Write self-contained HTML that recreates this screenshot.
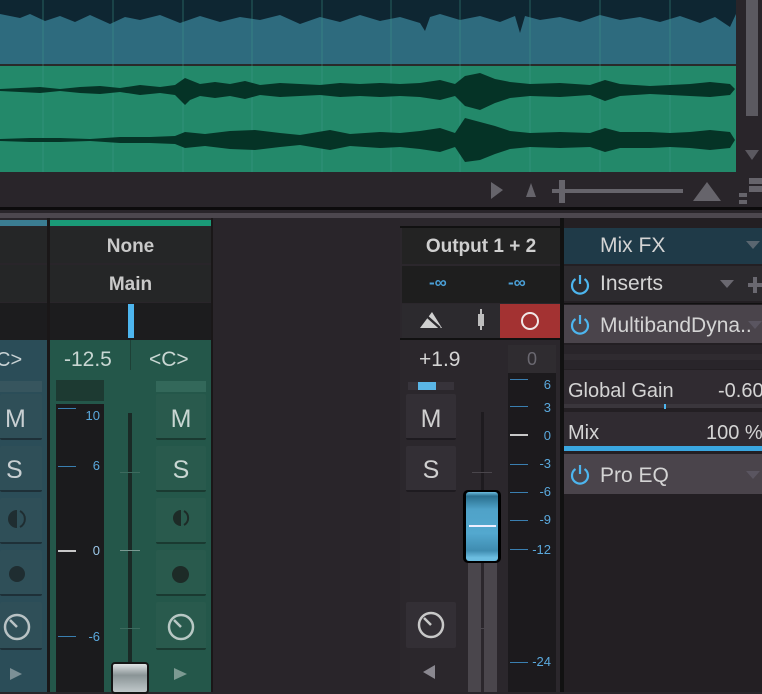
<!DOCTYPE html>
<html><head><meta charset="utf-8"><style>
*{margin:0;padding:0;box-sizing:border-box}
body{width:762px;height:692px;overflow:hidden;background:#29252a;font-family:"Liberation Sans",sans-serif;position:relative}
.a{position:absolute}
.t{position:absolute;white-space:nowrap;transform:translateY(2px)}
.btn{position:absolute;border-radius:2px}
.lbl{color:#5aa8dc;font-size:13px;text-align:right;width:30px}
</style></head><body>
<svg class="a" style="left:0;top:0" width="762" height="220">
<rect x="0" y="0" width="736" height="65" fill="#2e6b7e"/>
<rect x="0" y="0" width="736" height="14" fill="#0e2632"/>
<polyline fill="#0e2632" points="0,14 20,18 30,14 45,21 60,16 75,22 90,15 110,24 125,17 140,20 160,15 180,23 200,16 220,22 240,17 260,20 280,15 300,24 320,17 340,22 360,15 380,21 400,17 420,23 425,31 430,17 440,14 460,20 480,16 500,22 515,16 520,33 525,16 540,20 560,17 580,22 600,15 620,20 640,17 660,22 680,16 700,23 715,17 730,27 736,14"/>
<rect x="0" y="64" width="736" height="2" fill="#2a2a2a"/>
<rect x="0" y="66" width="736" height="106" fill="#23896a"/>
<g stroke="#3e9a8a" stroke-width="1" opacity=".5">
<line x1="43" y1="0" x2="43" y2="172"/><line x1="113" y1="0" x2="113" y2="172"/><line x1="183" y1="0" x2="183" y2="172"/><line x1="252" y1="0" x2="252" y2="172"/><line x1="322" y1="0" x2="322" y2="172"/><line x1="391" y1="0" x2="391" y2="172"/><line x1="460" y1="0" x2="460" y2="172"/><line x1="530" y1="0" x2="530" y2="172"/><line x1="600" y1="0" x2="600" y2="172"/><line x1="670" y1="0" x2="670" y2="172"/></g>
<g fill="#053326">
<polygon points="0,89 20,88 40,87 60,89 80,87 100,86 120,88 140,85 160,87 175,85 185,78 190,80 200,84 215,82 230,84 245,81 260,85 280,83 300,84 320,85 340,83 360,84 380,83 400,84 420,83 440,80 455,84 465,76 480,73 495,79 510,82 530,84 560,83 590,85 605,80 620,84 650,86 670,85 690,84 710,82 730,84 735,89 730,95 710,97 690,96 670,95 650,94 620,96 605,101 590,95 560,97 530,96 510,98 495,103 480,110 465,106 455,96 440,100 420,97 400,96 380,97 360,96 340,97 320,95 300,96 280,97 260,95 245,99 230,96 215,98 200,96 190,100 185,105 175,95 160,93 140,95 120,92 100,94 80,93 60,91 40,93 20,92 0,91"/>
<polygon points="0,139 30,138 60,138 90,139 120,137 150,137 175,136 185,132 205,134 230,131 255,130 280,133 300,135 330,130 350,134 380,132 400,133 420,131 440,128 455,133 465,118 480,122 495,126 510,131 530,133 560,132 590,133 605,128 620,132 650,132 670,133 690,132 710,130 730,132 735,140 730,148 710,150 690,148 670,147 650,148 620,148 605,152 590,147 560,148 530,147 510,149 495,154 480,160 465,162 455,147 440,152 420,149 400,147 380,148 350,146 330,150 300,145 280,147 255,150 230,149 205,146 185,148 175,144 150,143 120,143 90,141 60,142 30,142 0,141"/>
</g>
<rect x="736" y="0" width="26" height="210" fill="#29252a"/>
<rect x="746" y="0" width="12" height="116" fill="#5b5960"/>
<polygon points="745,150 759,150 752,160" fill="#5b5960"/>
<rect x="0" y="172" width="736" height="36" fill="#29252a"/>
<polygon points="491,182 491,199 503,190" fill="#66646b"/>
<polygon points="526,197 536,197 531,183" fill="#66646b"/>
<polygon points="693,201 721,201 707,182" fill="#66646b"/>
<rect x="552" y="189" width="131" height="4" fill="#66646b"/>
<rect x="559" y="180" width="6" height="23" fill="#66646b"/>
<rect x="749" y="178" width="13" height="6" fill="#66646b"/><rect x="749" y="186" width="13" height="6" fill="#66646b"/>
<rect x="739" y="193" width="8" height="4" fill="#66646b"/><rect x="739" y="200" width="8" height="4" fill="#66646b"/>
<rect x="0" y="207" width="762" height="3" fill="#0c0b0c"/>
<rect x="0" y="213" width="762" height="5" fill="#4c474e"/>
</svg>
<div class="a" style="left:0;top:218px;width:762px;height:474px;background:#29252a"></div>
<div class="a" style="left:0;top:220px;width:47px;height:6px;background:#3b7d92"></div>
<div class="a" style="left:0;top:227px;width:47px;height:36px;background:#252627"></div>
<div class="a" style="left:0;top:265px;width:47px;height:37px;background:#252627"></div>
<div class="a" style="left:0;top:303px;width:47px;height:37px;background:#1c1c1e"></div>
<div class="a" style="left:0;top:340px;width:47px;height:352px;background:#2b4d58"></div>
<div class="t" style="left:-4px;top:347px;color:#c8d2d4;font-size:20px">C&gt;</div>
<div class="a" style="left:0;top:381px;width:42px;height:11px;background:#37555e"></div>
<div class="btn" style="left:0;top:394px;width:42px;height:46px;background:#2f4f58;border-bottom:2px solid #1e3038"></div>
<div class="t" style="left:5px;top:403px;color:#c8cfd2;font-size:25px">M</div>
<div class="btn" style="left:0;top:446px;width:42px;height:46px;background:#2f4f58;border-bottom:2px solid #1e3038"></div>
<div class="t" style="left:6px;top:454px;color:#c8cfd2;font-size:25px">S</div>
<div class="btn" style="left:0;top:498px;width:42px;height:46px;background:#2f4f58;border-bottom:2px solid #1e3038"></div>
<div class="btn" style="left:0;top:550px;width:42px;height:46px;background:#2f4f58;border-bottom:2px solid #1e3038"></div>
<div class="a" style="left:9px;top:566px;width:16px;height:16px;border-radius:50%;background:#1f2d31"></div>
<div class="btn" style="left:0;top:602px;width:42px;height:48px;background:#2f4f58;border-bottom:2px solid #1e3038"></div>
<svg class="a" style="left:0;top:610px" width="42" height="34"><circle cx="17" cy="17" r="12" fill="none" stroke="#b8c2c4" stroke-width="2.5"/><line x1="17" y1="17" x2="10" y2="10" stroke="#b8c2c4" stroke-width="2.5"/></svg>
<svg class="a" style="left:0;top:496px" width="42" height="50"><path d="M17 14 a9 9 0 0 0 0 18 z" fill="#1f2d31"/><path d="M20 15 a9 9 0 0 1 0 16" fill="none" stroke="#1f2d31" stroke-width="2"/></svg>
<svg class="a" style="left:0;top:664px" width="42" height="20"><polygon points="10,4 10,16 22,10" fill="#7c9096"/></svg>
<div class="a" style="left:47px;top:218px;width:3px;height:474px;background:#1a1718"></div>
<div class="a" style="left:50px;top:220px;width:162px;height:6px;background:#1a9a77"></div>
<div class="a" style="left:50px;top:227px;width:161px;height:36px;background:#252627"></div>
<div class="t" style="left:50px;top:234px;width:161px;text-align:center;color:#c9c9c9;font-size:19px;font-weight:bold">None</div>
<div class="a" style="left:50px;top:265px;width:161px;height:37px;background:#252627"></div>
<div class="t" style="left:50px;top:272px;width:161px;text-align:center;color:#c9c9c9;font-size:19px;font-weight:bold">Main</div>
<div class="a" style="left:50px;top:303px;width:161px;height:37px;background:#1c1c1e"></div>
<div class="a" style="left:128px;top:304px;width:6px;height:34px;background:#4db5ee"></div>
<div class="a" style="left:50px;top:340px;width:161px;height:352px;background:#24574a"></div>
<div class="a" style="left:130px;top:340px;width:1px;height:30px;background:#1e4036"></div>
<div class="t" style="left:64px;top:346px;color:#c8d6d2;font-size:21px">-12.5</div>
<div class="t" style="left:149px;top:346px;color:#c8d6d2;font-size:21px">&lt;C&gt;</div>
<div class="a" style="left:56px;top:380px;width:48px;height:21px;background:#1d3a32"></div>
<div class="a" style="left:56px;top:404px;width:48px;height:288px;background:#1b1b1d"></div>
<div class="a" style="left:58px;top:408px;width:18px;height:1px;background:#3a7fb0"></div>
<div class="t lbl" style="left:70px;top:406px">10</div>
<div class="a" style="left:58px;top:466px;width:18px;height:1px;background:#3a7fb0"></div>
<div class="t lbl" style="left:70px;top:456px">6</div>
<div class="a" style="left:58px;top:550px;width:18px;height:2px;background:#c8c8c8"></div>
<div class="t lbl" style="left:70px;top:541px;color:#9cc8e8">0</div>
<div class="a" style="left:58px;top:636px;width:18px;height:1px;background:#3a7fb0"></div>
<div class="t lbl" style="left:70px;top:627px">-6</div>
<div class="a" style="left:128px;top:413px;width:4px;height:279px;background:#1a2a26"></div>
<div class="a" style="left:120px;top:472px;width:20px;height:1px;background:#3d6a5e"></div>
<div class="a" style="left:120px;top:550px;width:20px;height:1px;background:#7a9a92"></div>
<div class="a" style="left:120px;top:628px;width:20px;height:1px;background:#3d6a5e"></div>
<div class="a" style="left:111px;top:662px;width:38px;height:32px;background:linear-gradient(#dfe3e4,#8a9496 40%,#c0c8ca);border:2px solid #151515;border-radius:4px"></div>
<div class="a" style="left:156px;top:381px;width:50px;height:11px;background:#33685a"></div>
<div class="btn" style="left:156px;top:394px;width:50px;height:46px;background:#295a4d;border-bottom:2px solid #1a3a31"></div>
<div class="t" style="left:156px;top:403px;width:50px;text-align:center;color:#c8d6d2;font-size:25px">M</div>
<div class="btn" style="left:156px;top:446px;width:50px;height:46px;background:#295a4d;border-bottom:2px solid #1a3a31"></div>
<div class="t" style="left:156px;top:454px;width:50px;text-align:center;color:#c8d6d2;font-size:25px">S</div>
<div class="btn" style="left:156px;top:498px;width:50px;height:46px;background:#295a4d;border-bottom:2px solid #1a3a31"></div>
<svg class="a" style="left:156px;top:496px" width="50" height="50"><path d="M25 14 a8 8 0 0 0 0 16 z" fill="#1d2b27"/><path d="M28 15 a8 8 0 0 1 0 14" fill="none" stroke="#1d2b27" stroke-width="2"/></svg>
<div class="btn" style="left:156px;top:550px;width:50px;height:46px;background:#295a4d;border-bottom:2px solid #1a3a31"></div>
<div class="a" style="left:172px;top:566px;width:17px;height:17px;border-radius:50%;background:#1d2b27"></div>
<div class="btn" style="left:156px;top:602px;width:50px;height:48px;background:#295a4d;border-bottom:2px solid #1a3a31"></div>
<svg class="a" style="left:156px;top:610px" width="50" height="34"><circle cx="25" cy="17" r="12" fill="none" stroke="#b8c8c4" stroke-width="2.5"/><line x1="25" y1="17" x2="18" y2="10" stroke="#b8c8c4" stroke-width="2.5"/></svg>
<svg class="a" style="left:156px;top:664px" width="50" height="20"><polygon points="18,4 18,16 31,10" fill="#7c9a92"/></svg>
<div class="a" style="left:211px;top:218px;width:2px;height:474px;background:#1a1718"></div>
<div class="a" style="left:400px;top:218px;width:163px;height:474px;background:#2b272c"></div>
<div class="a" style="left:400px;top:226px;width:163px;height:2px;background:#111"></div>
<div class="a" style="left:402px;top:228px;width:158px;height:36px;background:#232323"></div>
<div class="t" style="left:402px;top:234px;width:158px;text-align:center;color:#cfcfcf;font-size:19px;font-weight:bold">Output 1 + 2</div>
<div class="a" style="left:402px;top:266px;width:158px;height:37px;background:#1e1e1e"></div>
<div class="t" style="left:429px;top:271px;color:#4a9fd6;font-size:17px;font-weight:bold">-∞</div>
<div class="t" style="left:508px;top:271px;color:#4a9fd6;font-size:17px;font-weight:bold">-∞</div>
<div class="a" style="left:402px;top:304px;width:98px;height:34px;background:#2c2a2e"></div>
<div class="a" style="left:500px;top:304px;width:60px;height:34px;background:#a33232"></div>
<div class="a" style="left:521px;top:312px;width:18px;height:18px;border-radius:50%;border:2.5px solid #f0e8e8"></div>
<svg class="a" style="left:418px;top:306px" width="80" height="30"><polygon points="2,22 14,6 24,22" fill="#d0d0d0"/><line x1="4" y1="6" x2="22" y2="22" stroke="#2c2a2e" stroke-width="2.5"/><rect x="60" y="8" width="6" height="12" fill="#bdbdbd"/><rect x="62" y="3" width="2" height="21" fill="#bdbdbd"/></svg>
<div class="a" style="left:400px;top:338px;width:163px;height:2px;background:#111"></div>
<div class="t" style="left:419px;top:346px;color:#d4d4d4;font-size:21px">+1.9</div>
<div class="a" style="left:408px;top:382px;width:46px;height:8px;background:#37333a"></div>
<div class="a" style="left:418px;top:382px;width:18px;height:8px;background:#5ab6e6"></div>
<div class="btn" style="left:406px;top:394px;width:50px;height:46px;background:#332f35;border-bottom:2px solid #1e1b20"></div>
<div class="t" style="left:406px;top:403px;width:50px;text-align:center;color:#cfcfcf;font-size:25px">M</div>
<div class="btn" style="left:406px;top:446px;width:50px;height:46px;background:#332f35;border-bottom:2px solid #1e1b20"></div>
<div class="t" style="left:406px;top:454px;width:50px;text-align:center;color:#cfcfcf;font-size:25px">S</div>
<div class="btn" style="left:406px;top:602px;width:50px;height:46px;background:#332f35"></div>
<svg class="a" style="left:406px;top:608px" width="50" height="34"><circle cx="25" cy="17" r="12" fill="none" stroke="#c8c8c8" stroke-width="2.5"/><line x1="25" y1="17" x2="18" y2="10" stroke="#c8c8c8" stroke-width="2.5"/></svg>
<svg class="a" style="left:415px;top:660px" width="30" height="24"><polygon points="8,12 20,5 20,19" fill="#8a8890"/></svg>
<div class="a" style="left:481px;top:412px;width:3px;height:80px;background:#1e1b1f"></div>
<div class="a" style="left:468px;top:562px;width:13px;height:130px;background:#4a464c"></div>
<div class="a" style="left:484px;top:562px;width:13px;height:130px;background:#4a464c"></div>
<div class="a" style="left:472px;top:472px;width:20px;height:1px;background:#4a464c"></div>
<div class="a" style="left:472px;top:628px;width:20px;height:1px;background:#4a464c"></div>
<div class="a" style="left:463px;top:490px;width:38px;height:73px;background:#000;border-radius:5px"></div>
<div class="a" style="left:466px;top:492px;width:32px;height:69px;border-radius:3px;background:linear-gradient(#6cbde0 0,#2a6f8e 6%,#4fa2c8 25%,#53a8cf 60%,#3f8cb0 85%,#6cbde0 95%)"></div>
<div class="a" style="left:469px;top:525px;width:27px;height:2px;background:#eef"></div>
<div class="a" style="left:508px;top:345px;width:48px;height:28px;background:#2f2c30"></div>
<div class="t" style="left:508px;top:347px;width:48px;text-align:center;color:#6a6870;font-size:18px">0</div>
<div class="a" style="left:508px;top:373px;width:48px;height:319px;background:#1c1a1d"></div>
<div class="a" style="left:510px;top:379px;width:18px;height:1px;background:#3a7fb0"></div>
<div class="t lbl" style="left:521px;top:375px">6</div>
<div class="a" style="left:510px;top:406px;width:18px;height:1px;background:#3a7fb0"></div>
<div class="t lbl" style="left:521px;top:398px">3</div>
<div class="a" style="left:510px;top:434px;width:18px;height:2px;background:#c8c8c8"></div>
<div class="t lbl" style="left:521px;top:426px">0</div>
<div class="a" style="left:510px;top:464px;width:18px;height:1px;background:#3a7fb0"></div>
<div class="t lbl" style="left:521px;top:454px">-3</div>
<div class="a" style="left:510px;top:492px;width:18px;height:1px;background:#3a7fb0"></div>
<div class="t lbl" style="left:521px;top:482px">-6</div>
<div class="a" style="left:510px;top:520px;width:18px;height:1px;background:#3a7fb0"></div>
<div class="t lbl" style="left:521px;top:510px">-9</div>
<div class="a" style="left:510px;top:549px;width:18px;height:1px;background:#3a7fb0"></div>
<div class="t lbl" style="left:521px;top:540px">-12</div>
<div class="a" style="left:510px;top:662px;width:18px;height:1px;background:#3a7fb0"></div>
<div class="t lbl" style="left:521px;top:652px">-24</div>
<div class="a" style="left:560px;top:218px;width:4px;height:474px;background:#111"></div>
<div class="a" style="left:564px;top:218px;width:198px;height:474px;background:#231f23"></div>
<div class="a" style="left:564px;top:228px;width:198px;height:36px;background:#1f3a48"></div>
<div class="t" style="left:600px;top:232px;color:#d4d4d4;font-size:21px">Mix FX</div>
<svg class="a" style="left:744px;top:238px" width="18" height="14"><polygon points="2,3 16,3 9,11" fill="#5a6670"/></svg>
<div class="a" style="left:564px;top:266px;width:198px;height:35px;background:#2c2a2e"></div>
<div class="t" style="left:600px;top:270px;color:#d4d4d4;font-size:21px">Inserts</div>
<svg class="a" style="left:718px;top:276px" width="44" height="20"><polygon points="2,4 16,4 9,12" fill="#6a6870"/><rect x="30" y="7" width="14" height="4" fill="#6a6870"/><rect x="35" y="1" width="4" height="16" fill="#6a6870"/></svg>
<div class="a" style="left:564px;top:303px;width:198px;height:1px;background:#111"></div>
<div class="a" style="left:564px;top:305px;width:198px;height:38px;background:#4a444b"></div>
<div class="t" style="left:600px;top:312px;color:#d4d4d4;font-size:21px">MultibandDyna..</div>
<svg class="a" style="left:748px;top:318px" width="14" height="14"><polygon points="0,3 14,3 7,11" fill="#5a5560"/></svg>
<div class="a" style="left:564px;top:345px;width:198px;height:24px;background:#29252a"></div>
<div class="a" style="left:564px;top:354px;width:198px;height:6px;background:#2f2b30"></div>
<div class="a" style="left:564px;top:370px;width:198px;height:37px;background:#302b31"></div>
<div class="t" style="left:568px;top:378px;color:#d4d4d4;font-size:20px">Global Gain</div>
<div class="t" style="left:718px;top:378px;color:#d4d4d4;font-size:20px">-0.60</div>
<div class="a" style="left:564px;top:404px;width:198px;height:4px;background:#3a363c"></div>
<div class="a" style="left:664px;top:404px;width:2px;height:5px;background:#4db5ee"></div>
<div class="a" style="left:564px;top:412px;width:198px;height:35px;background:#302b31"></div>
<div class="t" style="left:568px;top:420px;color:#d4d4d4;font-size:20px">Mix</div>
<div class="t" style="left:706px;top:420px;color:#d4d4d4;font-size:20px">100 %</div>
<div class="a" style="left:564px;top:446px;width:198px;height:5px;background:#3aa7e0"></div>
<div class="a" style="left:564px;top:454px;width:198px;height:40px;background:#4a444b"></div>
<div class="t" style="left:600px;top:462px;color:#d4d4d4;font-size:21px">Pro EQ</div>
<svg class="a" style="left:744px;top:468px" width="18" height="14"><polygon points="2,3 16,3 9,11" fill="#5a5560"/></svg>
<svg class="a" style="left:568px;top:272px" width="26" height="26"><path d="M7.5 7 a8 8 0 1 0 9 0" fill="none" stroke="#4db5ee" stroke-width="2.2"/><line x1="12" y1="3" x2="12" y2="12" stroke="#4db5ee" stroke-width="2.2"/></svg>
<svg class="a" style="left:568px;top:312px" width="26" height="26"><path d="M7.5 7 a8 8 0 1 0 9 0" fill="none" stroke="#4db5ee" stroke-width="2.2"/><line x1="12" y1="3" x2="12" y2="12" stroke="#4db5ee" stroke-width="2.2"/></svg>
<svg class="a" style="left:568px;top:462px" width="26" height="26"><path d="M7.5 7 a8 8 0 1 0 9 0" fill="none" stroke="#4db5ee" stroke-width="2.2"/><line x1="12" y1="3" x2="12" y2="12" stroke="#4db5ee" stroke-width="2.2"/></svg>
</body></html>
